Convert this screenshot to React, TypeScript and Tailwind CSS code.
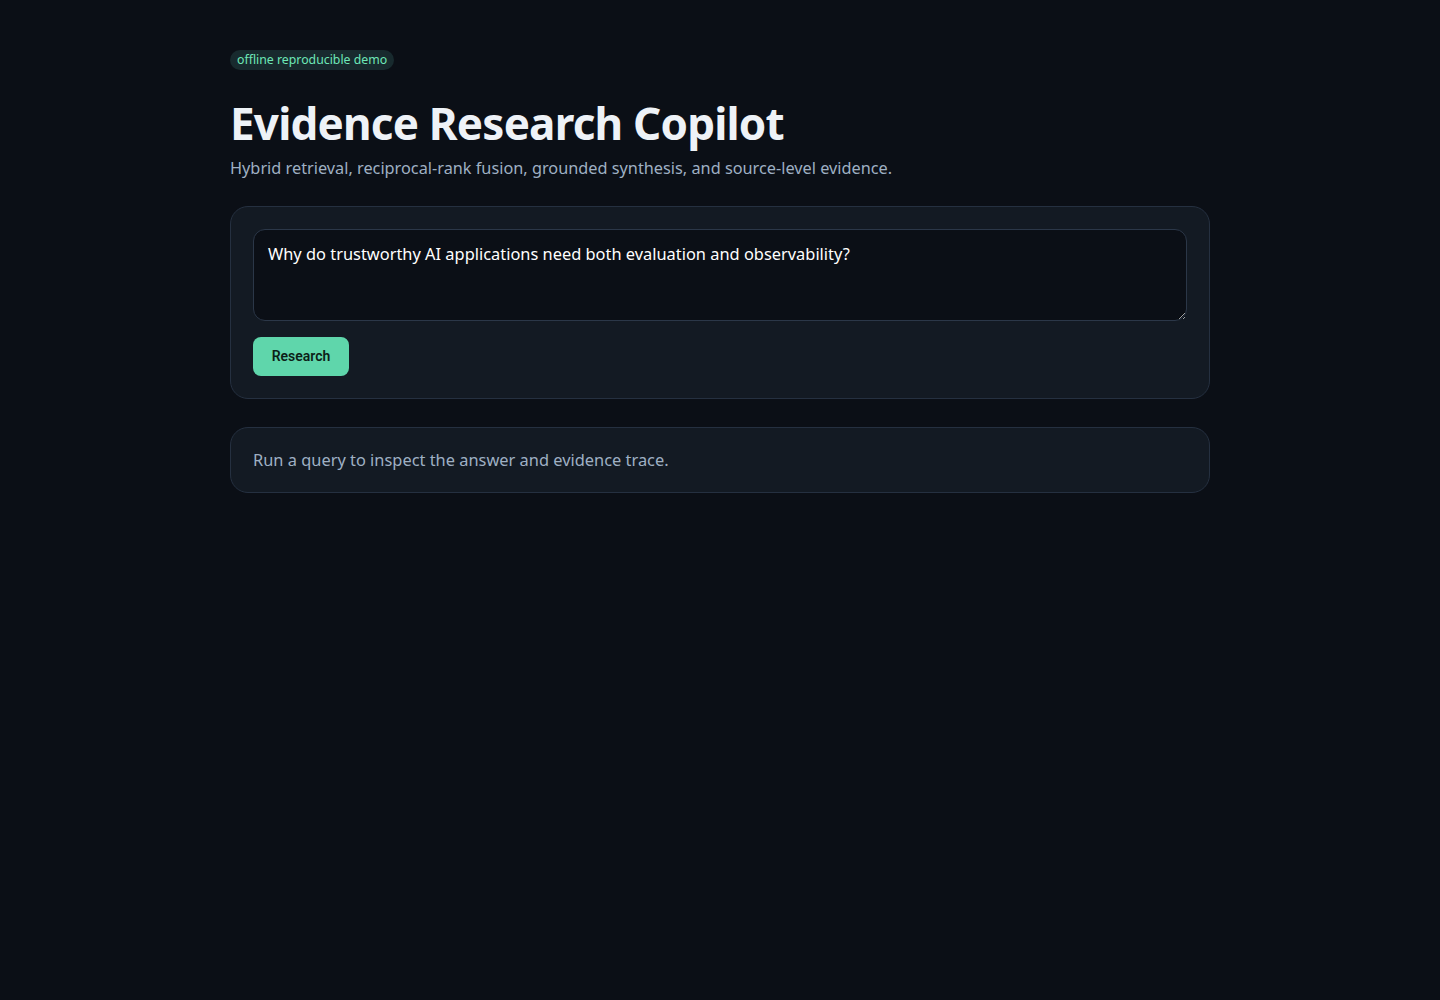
import React from "react";

export default function App() {
  return (
    <div className="min-h-screen bg-[#0b0f16] text-[#e6edf3]" style={{ fontFamily: '"Noto Sans", "Open Sans", sans-serif' }}>
      <div className="mx-auto w-[980px] pt-[50px]">
        <div className="flex h-[20px] w-fit items-center rounded-full bg-[#182a2e] px-[7px] text-[12.3px] leading-none text-[#6ee7b7]">
          offline reproducible demo
        </div>
        <h1 className="mt-[29px] text-[44px] font-bold leading-[1.1] tracking-[-0.8px] text-[#eef2f7]">
          Evidence Research Copilot
        </h1>
        <p className="mt-[10px] text-[16.3px] leading-[1.4] text-[#9fb0c3]">
          Hybrid retrieval, reciprocal-rank fusion, grounded synthesis, and source-level evidence.
        </p>

        <div className="mt-[26px] rounded-[18px] border border-[#253040] bg-[#131a23] p-[22px]">
          <textarea
            className="block h-[92px] w-full resize-y rounded-[12px] border border-[#2b3748] bg-[#0b0f16] px-[14px] pt-[13px] pb-[11px] text-[16.4px] leading-[1.4] text-white outline-none"
            style={{ fontFamily: '"Noto Sans", "Open Sans", sans-serif' }}
            defaultValue="Why do trustworthy AI applications need both evaluation and observability?"
          />
          <button
            className="mt-[16px] h-[39px] w-[96px] rounded-[8px] bg-[#5fd6ab] text-[14px] font-semibold text-[#0d1f18]"
            style={{ fontFamily: 'Roboto, "Liberation Sans", sans-serif' }}
          >
            Research
          </button>
        </div>

        <div className="mt-[28px] rounded-[18px] border border-[#253040] bg-[#131a23] px-[22px] pt-[21px] pb-[20px]">
          <p className="text-[16.4px] leading-[1.4] text-[#9fb0c3]">
            Run a query to inspect the answer and evidence trace.
          </p>
        </div>
      </div>
    </div>
  );
}
